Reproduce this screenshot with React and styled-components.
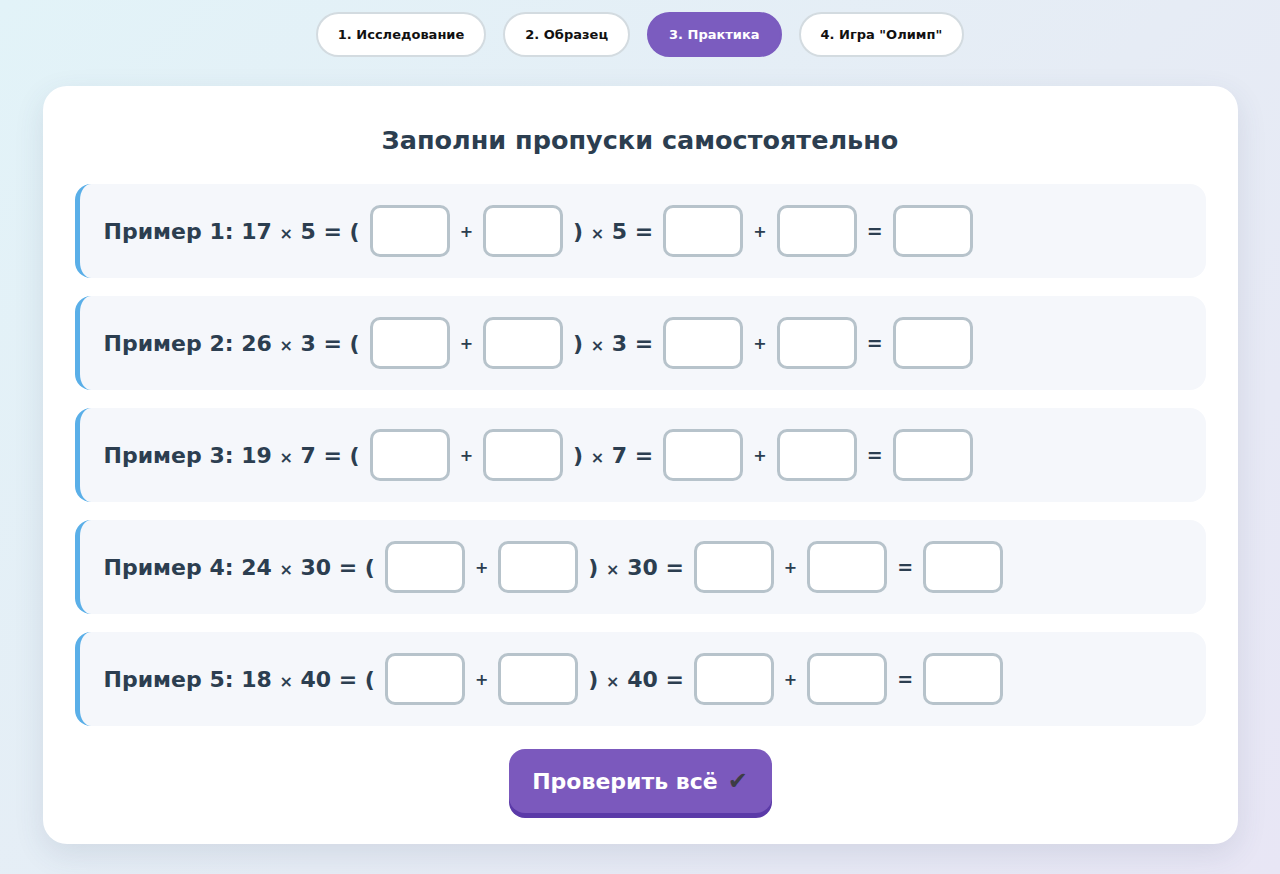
import React from 'react';
import styled, { createGlobalStyle } from 'styled-components';

const Global = createGlobalStyle`
  html, body {
    margin: 0;
    padding: 0;
  }
  body {
    min-height: 100vh;
    background: linear-gradient(135deg, #e2f3f8 0%, #e6ecf5 55%, #e8e6f5 100%);
    font-family: "Comic Sans MS", "DejaVu Sans", sans-serif;
    color: #2c3e50;
  }
`;

const Page = styled.div`
  padding-top: 12px;
  min-height: 874px;
  box-sizing: border-box;
`;

const Nav = styled.nav`
  display: flex;
  justify-content: center;
  gap: 17px;
  margin-bottom: 29px;
`;

const Tab = styled.button`
  height: 45px;
  padding: 0 20px;
  border-radius: 999px;
  border: 2px solid ${p => (p.$active ? '#7b5cbf' : '#d3dbe0')};
  background: ${p => (p.$active ? '#7b5cbf' : '#ffffff')};
  color: ${p => (p.$active ? '#ffffff' : '#111111')};
  font-family: inherit;
  font-weight: 700;
  font-size: 13px;
  cursor: pointer;
`;

const Card = styled.main`
  width: 1195px;
  margin: 0 auto;
  box-sizing: border-box;
  background: #ffffff;
  border-radius: 24px;
  padding: 32px 32px 26px;
  box-shadow: 0 10px 30px rgba(60, 70, 110, 0.12);
  display: flex;
  flex-direction: column;
  align-items: center;
`;

const Title = styled.h2`
  margin: 0 0 22px;
  font-size: 25.5px;
  line-height: 44px;
  font-weight: 700;
  color: #2c3e50;
`;

const List = styled.div`
  width: 100%;
  display: flex;
  flex-direction: column;
  gap: 18px;
`;

const Row = styled.div`
  height: 94px;
  box-sizing: border-box;
  background: #f5f7fb;
  border-left: 5px solid #5aafe8;
  border-radius: 16px;
  padding: 0 24px;
  display: flex;
  align-items: center;
  gap: 10px;
  font-size: 22px;
  font-weight: 700;
  color: #2c3e50;
  white-space: pre;
`;

const Op = styled.span`
  font-size: ${p => (p.$small ? '16px' : '19px')};
`;

const Box = styled.input`
  width: 80px;
  height: 52px;
  box-sizing: border-box;
  border: 3px solid #b7c3cb;
  border-radius: 10px;
  background: #ffffff;
  font-family: inherit;
  font-size: 22px;
  text-align: center;
  outline: none;
`;

const Check = styled.button`
  margin-top: 23px;
  width: 263px;
  height: 64px;
  border: none;
  border-radius: 16px;
  background: #7b59bd;
  box-shadow: 0 5px 0 #5b3aa8;
  color: #ffffff;
  font-family: inherit;
  font-weight: 700;
  font-size: 22px;
  cursor: pointer;
  margin-bottom: 5px;
`;

const Tick = styled.span`
  color: #3d3d45;
  margin-left: 10px;
  font-size: 24px;
`;

const tabs = ['1. Исследование', '2. Образец', '3. Практика', '4. Игра "Олимп"'];

const examples = [
  [17, 5],
  [26, 3],
  [19, 7],
  [24, 30],
  [18, 40],
];

export default function App() {
  return (
    <>
      <Global />
      <Page>
        <Nav>
          {tabs.map((t, i) => (
            <Tab key={t} $active={i === 2}>{t}</Tab>
          ))}
        </Nav>
        <Card>
          <Title>Заполни пропуски самостоятельно</Title>
          <List>
            {examples.map(([a, b], i) => (
              <Row key={i}>
                <span>{`Пример ${i + 1}: ${a} `}<Op $small>×</Op>{` ${b} = (`}</span>
                <Box />
                <Op $small>+</Op>
                <Box />
                <span>{`) `}<Op $small>×</Op>{` ${b} =`}</span>
                <Box />
                <Op $small>+</Op>
                <Box />
                <Op>=</Op>
                <Box />
              </Row>
            ))}
          </List>
          <Check>
            Проверить всё<Tick>✔</Tick>
          </Check>
        </Card>
      </Page>
    </>
  );
}
